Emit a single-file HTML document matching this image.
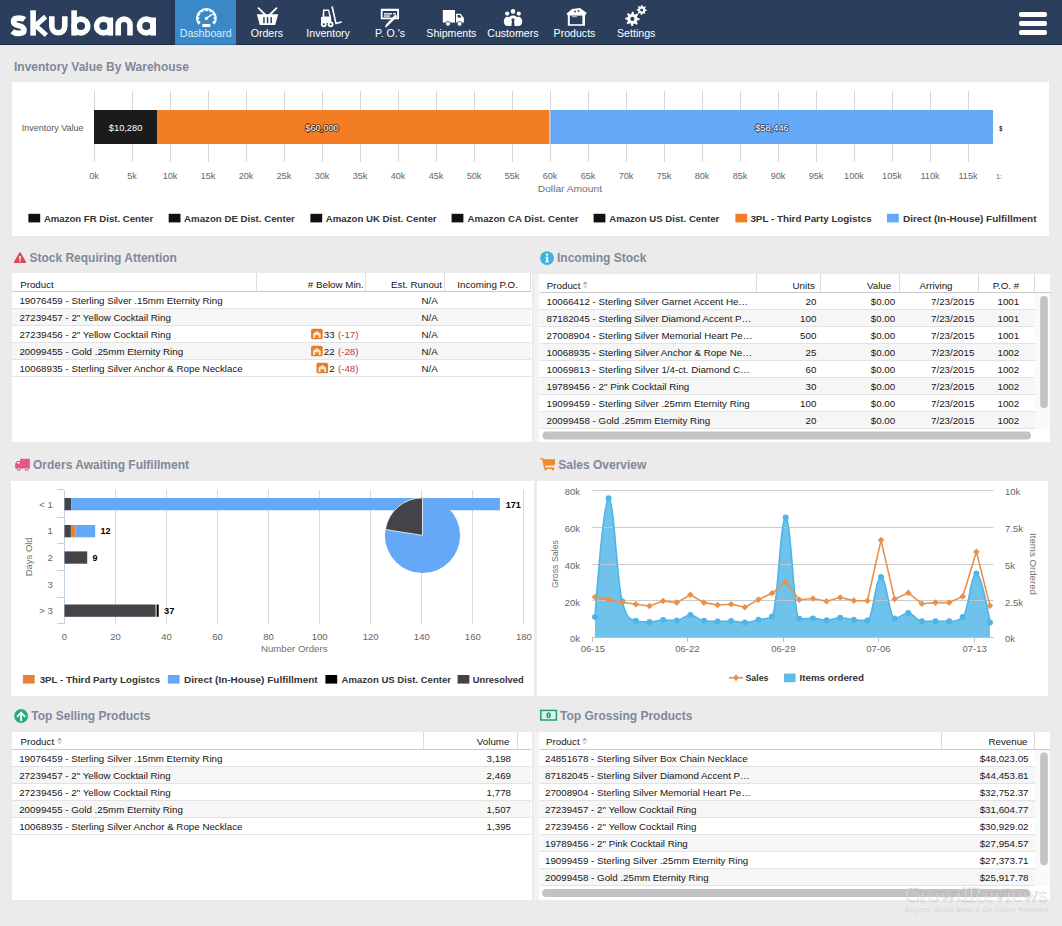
<!DOCTYPE html>
<html><head><meta charset="utf-8"><title>Skubana Dashboard</title>
<style>
*{margin:0;padding:0;box-sizing:border-box}
html,body{width:1062px;height:926px;overflow:hidden;background:#ebebeb;font-family:"Liberation Sans", sans-serif;}
.abs{position:absolute}
#hdr{position:absolute;left:0;top:0;width:1062px;height:45px;background:#2b3f5d}
.nav{position:absolute;top:0;height:45px;width:61px;color:#fff;font-size:10.6px;text-align:center}
.nav span{position:absolute;left:-10px;right:-10px;top:27px;line-height:12px}
.nav svg{position:absolute;left:0;top:0}
.ttl{position:absolute;font-weight:bold;font-size:12px;color:#808898;line-height:14px;white-space:nowrap}
.panel{position:absolute;background:#fff}
table{border-collapse:collapse;table-layout:fixed;font-size:9.75px;color:#1e1e1e}
td,th{white-space:nowrap;overflow:hidden;text-overflow:ellipsis;font-weight:normal}
</style></head><body>

<div id="hdr">
<div class="abs" style="left:170px;top:0;width:5px;height:45px;background:#25385a"></div>
<div class="abs" style="left:175px;top:0;width:61px;height:45px;background:#3b88c8"></div>
<svg class="abs" style="left:0;top:0" width="170" height="45"><g fill="none" stroke="#fff" stroke-width="5.6"><path d="M24.6,19.6 C22.8,18.3 21,18.1 18.7,18.1 C15.5,18.1 13.5,19.4 13.5,21.7 C13.5,24.2 16,24.9 18.7,25.6 C21.6,26.3 24,27.2 24,30 C24,32.4 21.8,33.4 18.6,33.4 C16,33.4 13.8,32.8 12.2,31.4"/><path d="M33.1,10.3 L33.1,35.6"/><path d="M45.6,16.6 L35.6,25.6 L46.4,35.2" stroke-width="4.8" stroke-linejoin="miter"/><path d="M51.8,16.3 L51.8,26.3 A6.5,6.5 0 0 0 64.8,26.3 L64.8,16.3"/><path d="M74.1,10.3 L74.1,35.6"/><circle cx="80.9" cy="26" r="6.9"/><circle cx="103.5" cy="26" r="6.9"/><path d="M110.3,17.5 L110.3,35.6"/><path d="M118.2,35.6 L118.2,25 A5.9,5.9 0 0 1 130,25 L130,35.6"/><circle cx="146.3" cy="26" r="6.9"/><path d="M153.2,17.5 L153.2,35.6"/></g></svg>
<div class="nav" style="left:175.2px"><span style="color:#d2f1ff">Dashboard</span></div>
<div class="nav" style="left:236.4px"><span>Orders</span></div>
<div class="nav" style="left:297.6px"><span>Inventory</span></div>
<div class="nav" style="left:359.5px"><span>P. O.'s</span></div>
<div class="nav" style="left:420.9px"><span>Shipments</span></div>
<div class="nav" style="left:482.4px"><span>Customers</span></div>
<div class="nav" style="left:544.0px"><span>Products</span></div>
<div class="nav" style="left:605.7px"><span>Settings</span></div>
<svg class="abs" style="left:0;top:0" width="1062" height="45">
<path d="M199.39,23.78 A8.9,8.9 0 1 1 213.41,23.78" fill="none" stroke="#fff" stroke-width="3.0"/><circle cx="198.93" cy="20.16" r="0.85" fill="#3b88c8"/><circle cx="198.96" cy="16.31" r="0.85" fill="#3b88c8"/><circle cx="200.96" cy="12.86" r="0.85" fill="#3b88c8"/><circle cx="204.15" cy="10.94" r="0.85" fill="#3b88c8"/><circle cx="208.65" cy="10.94" r="0.85" fill="#3b88c8"/><circle cx="211.84" cy="12.86" r="0.85" fill="#3b88c8"/><circle cx="213.84" cy="16.31" r="0.85" fill="#3b88c8"/><circle cx="213.87" cy="20.16" r="0.85" fill="#3b88c8"/>
<path d="M206.2,18.4 L211.6,14.7" stroke="#fff" stroke-width="1.5" stroke-linecap="round"/><circle cx="206.3" cy="18.4" r="1.6" fill="#fff"/>
<rect x="202.3" y="24.1" width="8.1" height="2.8" rx="0.5" fill="#fff"/>
<path d="M258.5,8.2 L265.5,15" stroke="#fff" stroke-width="1.8" stroke-linecap="round"/><path d="M276.5,8.2 L269.5,15" stroke="#fff" stroke-width="1.8" stroke-linecap="round"/>
<path d="M256.8,14.2 L278.2,14.2 L277.4,17 L275.2,25.1 L259.8,25.1 L257.6,17 Z" fill="#fff"/>
<rect x="263.2" y="17.2" width="1.5" height="6" fill="#2b3f5d"/><rect x="266.8" y="17.2" width="1.5" height="6" fill="#2b3f5d"/><rect x="270.4" y="17.2" width="1.5" height="6" fill="#2b3f5d"/>
<path d="M332.2,7 L336,23.6 L341.2,22" fill="none" stroke="#fff" stroke-width="1.6" stroke-linecap="round" stroke-linejoin="round"/>
<path d="M323,9.5 L329,9.5 L331,17 L331.5,23 L321,23 L321,17 L322.5,17 Z M324.3,11 L324.3,16.5 L329.4,16.5 L328,11 Z" fill="#fff" fill-rule="evenodd"/>
<circle cx="323.8" cy="24.3" r="2.9" fill="#fff"/><circle cx="323.8" cy="24.3" r="1.1" fill="#2b3f5d"/><circle cx="330.6" cy="24.3" r="2.9" fill="#fff"/><circle cx="330.6" cy="24.3" r="1.1" fill="#2b3f5d"/>
<path d="M380.8,8.8 L399,8.8 L399,19.2 L380.8,19.2 Z M382.6,11 L382.6,17.5 L397.2,17.5 L397.2,11 Z" fill="#fff" fill-rule="evenodd"/>
<rect x="384" y="13.2" width="8" height="1.3" fill="#fff"/><rect x="384" y="15.4" width="6" height="1.3" fill="#fff"/><rect x="393" y="13.2" width="3" height="1.3" fill="#fff"/>
<path d="M396.5,16.3 L387.3,25.6 L385.8,26.8 L386.4,25 L395.3,15.4 Z" fill="#fff" stroke="#fff" stroke-width="1.2" stroke-linejoin="round"/>
<rect x="442.8" y="10" width="12.2" height="12.6" fill="#fff"/><path d="M456,13.8 L460.5,13.8 L463.9,18 L463.9,22.6 L456,22.6 Z" fill="#fff"/><path d="M457.5,15 L459.8,15 L461.8,17.6 L457.5,17.6 Z" fill="#2b3f5d"/>
<circle cx="448" cy="23.8" r="2.4" fill="#fff" stroke="#2b3f5d" stroke-width="0.8"/><circle cx="459.6" cy="23.8" r="2.4" fill="#fff" stroke="#2b3f5d" stroke-width="0.8"/>
<ellipse cx="507.4" cy="21.4" rx="3.6" ry="4.6" fill="#fff"/><ellipse cx="518.6" cy="21.4" rx="3.6" ry="4.6" fill="#fff"/>
<circle cx="507.2" cy="13.6" r="2.1" fill="#fff"/><circle cx="518.8" cy="13.6" r="2.1" fill="#fff"/>
<path d="M508.6,26 L508.6,19.5 Q508.6,15.4 513,15.4 Q517.4,15.4 517.4,19.5 L517.4,26 Z" fill="#fff"/>
<circle cx="513" cy="11.4" r="2.3" fill="#fff"/>
<circle cx="513" cy="19.9" r="1.6" fill="#2b3f5d"/><path d="M511.3,26.2 L512,21 L514,21 L514.7,26.2 Z" fill="#2b3f5d"/>
<path d="M566.5,13.8 L572,9 L580,8 L586.8,13 L585,15.5 L585,25.8 L567.8,25.8 L567.8,15.5 Z" fill="#fff"/>
<rect x="569.8" y="15.6" width="12.6" height="8.6" fill="#2b3f5d"/><rect x="572" y="16.2" width="5" height="1" fill="#fff" opacity="0.7"/>
<circle cx="575" cy="11.5" r="0.9" fill="#2b3f5d"/><circle cx="578.5" cy="11" r="0.9" fill="#2b3f5d"/>
<path d="M632.05,11.71 L633.46,11.78 L634.08,14.19 L634.97,14.61 L637.24,13.57 L638.18,14.61 L636.92,16.76 L637.25,17.69 L639.59,18.55 L639.52,19.96 L637.11,20.58 L636.69,21.47 L637.73,23.74 L636.69,24.68 L634.54,23.42 L633.61,23.75 L632.75,26.09 L631.34,26.02 L630.72,23.61 L629.83,23.19 L627.56,24.23 L626.62,23.19 L627.88,21.04 L627.55,20.11 L625.21,19.25 L625.28,17.84 L627.69,17.22 L628.11,16.33 L627.07,14.06 L628.11,13.12 L630.26,14.38 L631.19,14.05 Z M634.5,18.9 A2.1,2.1 0 1 0 630.3,18.9 A2.1,2.1 0 1 0 634.5,18.9 Z" fill="#fff" fill-rule="evenodd"/>
<path d="M641.45,5.01 L642.43,5.05 L642.88,6.70 L643.50,7.00 L645.06,6.30 L645.72,7.02 L644.86,8.50 L645.10,9.15 L646.69,9.75 L646.65,10.73 L645.00,11.18 L644.70,11.80 L645.40,13.36 L644.68,14.02 L643.20,13.16 L642.55,13.40 L641.95,14.99 L640.97,14.95 L640.52,13.30 L639.90,13.00 L638.34,13.70 L637.68,12.98 L638.54,11.50 L638.30,10.85 L636.71,10.25 L636.75,9.27 L638.40,8.82 L638.70,8.20 L638.00,6.64 L638.72,5.98 L640.20,6.84 L640.85,6.60 Z M643.2,10.0 A1.5,1.5 0 1 0 640.2,10.0 A1.5,1.5 0 1 0 643.2,10.0 Z" fill="#fff" fill-rule="evenodd"/>
</svg>
<div class="abs" style="left:0;top:44px;width:1062px;height:1px;background:#1f2e44"></div>
<div class="abs" style="left:0;top:45px;width:1062px;height:1px;background:#e2e8ee"></div>
<div class="abs" style="left:175px;top:44px;width:61px;height:1px;background:#2f6ea6"></div>
<div class="abs" style="left:175px;top:45px;width:61px;height:1px;background:#d8eef8"></div>
<div class="abs" style="left:1019px;top:12px;width:28px;height:4.5px;border-radius:2px;background:#fff"></div>
<div class="abs" style="left:1019px;top:21px;width:28px;height:4.5px;border-radius:2px;background:#fff"></div>
<div class="abs" style="left:1019px;top:30px;width:28px;height:4.5px;border-radius:2px;background:#fff"></div>
</div>
<div class="ttl" style="left:14px;top:60px">Inventory Value By Warehouse</div>
<div class="ttl" style="left:29.4px;top:251px">Stock Requiring Attention</div>
<div class="ttl" style="left:557px;top:251px">Incoming Stock</div>
<div class="ttl" style="left:33px;top:458px">Orders Awaiting Fulfillment</div>
<div class="ttl" style="left:558.3px;top:458px">Sales Overview</div>
<div class="ttl" style="left:31.3px;top:709px">Top Selling Products</div>
<div class="ttl" style="left:560px;top:709px">Top Grossing Products</div>
<div class="panel" style="left:12px;top:82px;width:1037px;height:154px"></div>
<div class="panel" style="left:12px;top:273px;width:520px;height:169px"></div>
<div class="panel" style="left:539px;top:274px;width:511px;height:168px"></div>
<div class="panel" style="left:11px;top:481px;width:523px;height:215px"></div>
<div class="panel" style="left:537px;top:481px;width:511px;height:215px"></div>
<div class="panel" style="left:12px;top:732px;width:520px;height:168px"></div>
<div class="panel" style="left:539px;top:732px;width:511px;height:168px"></div>
<div class="abs" style="left:534px;top:274px;width:5px;height:168px;background:#f2f2f2"></div>
<div class="abs" style="left:534px;top:732px;width:5px;height:168px;background:#f2f2f2"></div>
<svg class="abs" style="left:0;top:0;font-family:'Liberation Sans',sans-serif" width="1062" height="926">
<rect x="94" y="91" width="1" height="71" fill="#d6d6d6"/>
<rect x="132" y="91" width="1" height="71" fill="#d6d6d6"/>
<rect x="170" y="91" width="1" height="71" fill="#d6d6d6"/>
<rect x="208" y="91" width="1" height="71" fill="#d6d6d6"/>
<rect x="246" y="91" width="1" height="71" fill="#d6d6d6"/>
<rect x="284" y="91" width="1" height="71" fill="#d6d6d6"/>
<rect x="322" y="91" width="1" height="71" fill="#d6d6d6"/>
<rect x="360" y="91" width="1" height="71" fill="#d6d6d6"/>
<rect x="398" y="91" width="1" height="71" fill="#d6d6d6"/>
<rect x="436" y="91" width="1" height="71" fill="#d6d6d6"/>
<rect x="474" y="91" width="1" height="71" fill="#d6d6d6"/>
<rect x="512" y="91" width="1" height="71" fill="#d6d6d6"/>
<rect x="550" y="91" width="1" height="71" fill="#d6d6d6"/>
<rect x="588" y="91" width="1" height="71" fill="#d6d6d6"/>
<rect x="626" y="91" width="1" height="71" fill="#d6d6d6"/>
<rect x="664" y="91" width="1" height="71" fill="#d6d6d6"/>
<rect x="702" y="91" width="1" height="71" fill="#d6d6d6"/>
<rect x="740" y="91" width="1" height="71" fill="#d6d6d6"/>
<rect x="778" y="91" width="1" height="71" fill="#d6d6d6"/>
<rect x="816" y="91" width="1" height="71" fill="#d6d6d6"/>
<rect x="854" y="91" width="1" height="71" fill="#d6d6d6"/>
<rect x="892" y="91" width="1" height="71" fill="#d6d6d6"/>
<rect x="930" y="91" width="1" height="71" fill="#d6d6d6"/>
<rect x="968" y="91" width="1" height="71" fill="#d6d6d6"/>
<rect x="94" y="110" width="63" height="34" fill="#1b1b1b"/>
<rect x="157" y="110" width="392.5" height="34" fill="#f27d24"/>
<rect x="550.5" y="110" width="442.5" height="34" fill="#64a9f7"/>
<text x="125.6" y="131.3" font-size="9" fill="#fff" text-anchor="middle" textLength="33.5" lengthAdjust="spacingAndGlyphs">$10,280</text>
<text x="322.0" y="131.3" font-size="9" fill="#fff" text-anchor="middle" textLength="33.5" lengthAdjust="spacingAndGlyphs" stroke="#4a2a10" stroke-width="1.6" paint-order="stroke">$60,000</text>
<text x="772.0" y="131.3" font-size="9" fill="#fff" text-anchor="middle" textLength="33.5" lengthAdjust="spacingAndGlyphs" stroke="#2c4d78" stroke-width="1.6" paint-order="stroke">$58,446</text>
<text x="999.2" y="131.3" font-size="8" fill="#111" font-weight="bold" textLength="3.0" lengthAdjust="spacingAndGlyphs">$</text>
<text x="83.6" y="131.0" font-size="8.5" fill="#555" text-anchor="end" textLength="61.8" lengthAdjust="spacingAndGlyphs">Inventory Value</text>
<text x="94.0" y="179.2" font-size="8.6" fill="#666" text-anchor="middle" textLength="9.6" lengthAdjust="spacingAndGlyphs">0k</text>
<text x="132.0" y="179.2" font-size="8.6" fill="#666" text-anchor="middle" textLength="9.6" lengthAdjust="spacingAndGlyphs">5k</text>
<text x="170.0" y="179.2" font-size="8.6" fill="#666" text-anchor="middle" textLength="14.7" lengthAdjust="spacingAndGlyphs">10k</text>
<text x="208.0" y="179.2" font-size="8.6" fill="#666" text-anchor="middle" textLength="14.7" lengthAdjust="spacingAndGlyphs">15k</text>
<text x="246.0" y="179.2" font-size="8.6" fill="#666" text-anchor="middle" textLength="14.7" lengthAdjust="spacingAndGlyphs">20k</text>
<text x="284.0" y="179.2" font-size="8.6" fill="#666" text-anchor="middle" textLength="14.7" lengthAdjust="spacingAndGlyphs">25k</text>
<text x="322.0" y="179.2" font-size="8.6" fill="#666" text-anchor="middle" textLength="14.7" lengthAdjust="spacingAndGlyphs">30k</text>
<text x="360.0" y="179.2" font-size="8.6" fill="#666" text-anchor="middle" textLength="14.7" lengthAdjust="spacingAndGlyphs">35k</text>
<text x="398.0" y="179.2" font-size="8.6" fill="#666" text-anchor="middle" textLength="14.7" lengthAdjust="spacingAndGlyphs">40k</text>
<text x="436.0" y="179.2" font-size="8.6" fill="#666" text-anchor="middle" textLength="14.7" lengthAdjust="spacingAndGlyphs">45k</text>
<text x="474.0" y="179.2" font-size="8.6" fill="#666" text-anchor="middle" textLength="14.7" lengthAdjust="spacingAndGlyphs">50k</text>
<text x="512.0" y="179.2" font-size="8.6" fill="#666" text-anchor="middle" textLength="14.7" lengthAdjust="spacingAndGlyphs">55k</text>
<text x="550.0" y="179.2" font-size="8.6" fill="#666" text-anchor="middle" textLength="14.7" lengthAdjust="spacingAndGlyphs">60k</text>
<text x="588.0" y="179.2" font-size="8.6" fill="#666" text-anchor="middle" textLength="14.7" lengthAdjust="spacingAndGlyphs">65k</text>
<text x="626.0" y="179.2" font-size="8.6" fill="#666" text-anchor="middle" textLength="14.7" lengthAdjust="spacingAndGlyphs">70k</text>
<text x="664.0" y="179.2" font-size="8.6" fill="#666" text-anchor="middle" textLength="14.7" lengthAdjust="spacingAndGlyphs">75k</text>
<text x="702.0" y="179.2" font-size="8.6" fill="#666" text-anchor="middle" textLength="14.7" lengthAdjust="spacingAndGlyphs">80k</text>
<text x="740.0" y="179.2" font-size="8.6" fill="#666" text-anchor="middle" textLength="14.7" lengthAdjust="spacingAndGlyphs">85k</text>
<text x="778.0" y="179.2" font-size="8.6" fill="#666" text-anchor="middle" textLength="14.7" lengthAdjust="spacingAndGlyphs">90k</text>
<text x="816.0" y="179.2" font-size="8.6" fill="#666" text-anchor="middle" textLength="14.7" lengthAdjust="spacingAndGlyphs">95k</text>
<text x="854.0" y="179.2" font-size="8.6" fill="#666" text-anchor="middle" textLength="19.8" lengthAdjust="spacingAndGlyphs">100k</text>
<text x="892.0" y="179.2" font-size="8.6" fill="#666" text-anchor="middle" textLength="19.8" lengthAdjust="spacingAndGlyphs">105k</text>
<text x="930.0" y="179.2" font-size="8.6" fill="#666" text-anchor="middle" textLength="19.1" lengthAdjust="spacingAndGlyphs">110k</text>
<text x="968.0" y="179.2" font-size="8.6" fill="#666" text-anchor="middle" textLength="19.1" lengthAdjust="spacingAndGlyphs">115k</text>
<text x="996.0" y="179.0" font-size="8" fill="#666" textLength="6.0" lengthAdjust="spacingAndGlyphs">1:</text>
<text x="537.8" y="192.0" font-size="9.5" fill="#6f6f6f" textLength="64.2" lengthAdjust="spacingAndGlyphs">Dollar Amount</text>
<rect x="28.4" y="213.8" width="11.8" height="8.6" fill="#111"/>
<text x="43.9" y="221.6" font-size="9" fill="#333" font-weight="bold" textLength="109.3" lengthAdjust="spacingAndGlyphs">Amazon FR Dist. Center</text>
<rect x="168.7" y="213.8" width="11.8" height="8.6" fill="#111"/>
<text x="184.1" y="221.6" font-size="9" fill="#333" font-weight="bold" textLength="110.8" lengthAdjust="spacingAndGlyphs">Amazon DE Dist. Center</text>
<rect x="310.4" y="213.8" width="11.8" height="8.6" fill="#111"/>
<text x="325.8" y="221.6" font-size="9" fill="#333" font-weight="bold" textLength="110.8" lengthAdjust="spacingAndGlyphs">Amazon UK Dist. Center</text>
<rect x="451.6" y="213.8" width="11.8" height="8.6" fill="#111"/>
<text x="467.6" y="221.6" font-size="9" fill="#333" font-weight="bold" textLength="111.0" lengthAdjust="spacingAndGlyphs">Amazon CA Dist. Center</text>
<rect x="593.6" y="213.8" width="11.8" height="8.6" fill="#111"/>
<text x="609.2" y="221.6" font-size="9" fill="#333" font-weight="bold" textLength="110.2" lengthAdjust="spacingAndGlyphs">Amazon US Dist. Center</text>
<rect x="735.4" y="213.8" width="11.8" height="8.6" fill="#f27d24"/>
<text x="750.4" y="221.6" font-size="9" fill="#333" font-weight="bold" textLength="121.3" lengthAdjust="spacingAndGlyphs">3PL - Third Party Logistcs</text>
<rect x="887.0" y="213.8" width="11.8" height="8.6" fill="#64a9f7"/>
<text x="903.0" y="221.6" font-size="9" fill="#333" font-weight="bold" textLength="133.5" lengthAdjust="spacingAndGlyphs">Direct (In-House) Fulfillment</text>
</svg>
<svg class="abs" style="left:0;top:0;font-family:'Liberation Sans',sans-serif" width="1062" height="926">
<rect x="256" y="273" width="1" height="18" fill="#dcdcdc"/><rect x="365" y="273" width="1" height="18" fill="#dcdcdc"/><rect x="444" y="273" width="1" height="18" fill="#dcdcdc"/><rect x="530" y="273" width="1" height="18" fill="#dcdcdc"/><rect x="12" y="291" width="519" height="1" fill="#c9c9c9"/><rect x="12" y="308" width="519" height="1" fill="#e3e3e3"/><rect x="12" y="309" width="519" height="16" fill="#f6f6f6"/><rect x="12" y="325" width="519" height="1" fill="#e3e3e3"/><rect x="12" y="342" width="519" height="1" fill="#e3e3e3"/><rect x="12" y="343" width="519" height="16" fill="#f6f6f6"/><rect x="12" y="359" width="519" height="1" fill="#e3e3e3"/><rect x="12" y="376" width="519" height="1" fill="#e3e3e3"/>
<text x="20.2" y="288.0" font-size="9.75" fill="#151515">Product</text>
<text x="363.7" y="288.0" font-size="9.75" fill="#151515" text-anchor="end"># Below Min.</text>
<text x="442.0" y="288.0" font-size="9.75" fill="#151515" text-anchor="end">Est. Runout</text>
<text x="487.6" y="288.0" font-size="9.75" fill="#151515" text-anchor="middle">Incoming P.O.</text>
<text x="19.4" y="303.7" font-size="9.75" fill="#151515">19076459 - Sterling Silver .15mm Eternity Ring</text>
<text x="437.7" y="303.7" font-size="9.75" fill="#151515" text-anchor="end">N/A</text>
<text x="19.4" y="320.7" font-size="9.75" fill="#151515">27239457 - 2" Yellow Cocktail Ring</text>
<text x="437.7" y="320.7" font-size="9.75" fill="#151515" text-anchor="end">N/A</text>
<text x="19.4" y="337.7" font-size="9.75" fill="#151515">27239456 - 2" Yellow Cocktail Ring</text>
<text x="437.7" y="337.7" font-size="9.75" fill="#151515" text-anchor="end">N/A</text>
<text x="358.5" y="337.7" font-size="9.75" fill="#b8403f" text-anchor="end">(-17)</text>
<text x="334.7" y="337.7" font-size="9.75" fill="#151515" text-anchor="end">33</text>
<rect x="311.07300781249995" y="328.7" width="11.6" height="10.6" rx="1.6" fill="#e27f2e"/><path d="M313.07300781249995,337.9 L313.07300781249995,333.7 L316.87300781249996,330.9 L320.6730078125,333.7 L320.6730078125,337.9 L318.6730078125,337.9 L318.6730078125,335.3 L315.07300781249995,335.3 L315.07300781249995,337.9 Z" fill="#fde2c4"/>
<text x="19.4" y="354.7" font-size="9.75" fill="#151515">20099455 - Gold .25mm Eternity Ring</text>
<text x="437.7" y="354.7" font-size="9.75" fill="#151515" text-anchor="end">N/A</text>
<text x="358.5" y="354.7" font-size="9.75" fill="#b8403f" text-anchor="end">(-28)</text>
<text x="334.7" y="354.7" font-size="9.75" fill="#151515" text-anchor="end">22</text>
<rect x="311.07300781249995" y="345.7" width="11.6" height="10.6" rx="1.6" fill="#e27f2e"/><path d="M313.07300781249995,354.9 L313.07300781249995,350.7 L316.87300781249996,347.9 L320.6730078125,350.7 L320.6730078125,354.9 L318.6730078125,354.9 L318.6730078125,352.3 L315.07300781249995,352.3 L315.07300781249995,354.9 Z" fill="#fde2c4"/>
<text x="19.4" y="371.7" font-size="9.75" fill="#151515">10068935 - Sterling Silver Anchor &amp; Rope Necklace</text>
<text x="437.7" y="371.7" font-size="9.75" fill="#151515" text-anchor="end">N/A</text>
<text x="358.5" y="371.7" font-size="9.75" fill="#b8403f" text-anchor="end">(-48)</text>
<text x="334.7" y="371.7" font-size="9.75" fill="#151515" text-anchor="end">2</text>
<rect x="316.494921875" y="362.7" width="11.6" height="10.6" rx="1.6" fill="#e27f2e"/><path d="M318.494921875,371.9 L318.494921875,367.7 L322.294921875,364.9 L326.094921875,367.7 L326.094921875,371.9 L324.094921875,371.9 L324.094921875,369.3 L320.494921875,369.3 L320.494921875,371.9 Z" fill="#fde2c4"/>
<rect x="756" y="274" width="1" height="18" fill="#dcdcdc"/><rect x="820" y="274" width="1" height="18" fill="#dcdcdc"/><rect x="899" y="274" width="1" height="18" fill="#dcdcdc"/><rect x="978" y="274" width="1" height="18" fill="#dcdcdc"/><rect x="1034" y="274" width="1" height="18" fill="#dcdcdc"/><rect x="540" y="292" width="510" height="1" fill="#c9c9c9"/><rect x="540" y="309" width="495" height="1" fill="#e3e3e3"/><rect x="540" y="310" width="495" height="16" fill="#f6f6f6"/><rect x="540" y="326" width="495" height="1" fill="#e3e3e3"/><rect x="540" y="343" width="495" height="1" fill="#e3e3e3"/><rect x="540" y="344" width="495" height="16" fill="#f6f6f6"/><rect x="540" y="360" width="495" height="1" fill="#e3e3e3"/><rect x="540" y="377" width="495" height="1" fill="#e3e3e3"/><rect x="540" y="378" width="495" height="16" fill="#f6f6f6"/><rect x="540" y="394" width="495" height="1" fill="#e3e3e3"/><rect x="540" y="411" width="495" height="1" fill="#e3e3e3"/><rect x="540" y="412" width="495" height="16" fill="#f6f6f6"/><rect x="540" y="428" width="495" height="1" fill="#e3e3e3"/>
<text x="546.8" y="288.8" font-size="9.75" fill="#151515">Product</text>
<path d="M582.6,284.2 L587.8000000000001,284.2 L585.2,281.2 Z" fill="#ababab"/><path d="M582.6,285.40000000000003 L587.8000000000001,285.40000000000003 L585.2,288.40000000000003 Z" fill="#d0d0d0"/>
<text x="814.8" y="288.8" font-size="9.75" fill="#151515" text-anchor="end">Units</text>
<text x="891.2" y="288.8" font-size="9.75" fill="#151515" text-anchor="end">Value</text>
<text x="936.0" y="288.8" font-size="9.75" fill="#151515" text-anchor="middle">Arriving</text>
<text x="1006.0" y="288.8" font-size="9.75" fill="#151515" text-anchor="middle">P.O. #</text>
<text x="546.5" y="304.7" font-size="9.75" fill="#151515">10066412 - Sterling Silver Garnet Accent He…</text>
<text x="816.4" y="304.7" font-size="9.75" fill="#151515" text-anchor="end">20</text>
<text x="895.2" y="304.7" font-size="9.75" fill="#151515" text-anchor="end">$0.00</text>
<text x="974.4" y="304.7" font-size="9.75" fill="#151515" text-anchor="end">7/23/2015</text>
<text x="1019.2" y="304.7" font-size="9.75" fill="#151515" text-anchor="end">1001</text>
<text x="546.5" y="321.7" font-size="9.75" fill="#151515">87182045 - Sterling Silver Diamond Accent P…</text>
<text x="816.4" y="321.7" font-size="9.75" fill="#151515" text-anchor="end">100</text>
<text x="895.2" y="321.7" font-size="9.75" fill="#151515" text-anchor="end">$0.00</text>
<text x="974.4" y="321.7" font-size="9.75" fill="#151515" text-anchor="end">7/23/2015</text>
<text x="1019.2" y="321.7" font-size="9.75" fill="#151515" text-anchor="end">1001</text>
<text x="546.5" y="338.7" font-size="9.75" fill="#151515">27008904 - Sterling Silver Memorial Heart Pe…</text>
<text x="816.4" y="338.7" font-size="9.75" fill="#151515" text-anchor="end">500</text>
<text x="895.2" y="338.7" font-size="9.75" fill="#151515" text-anchor="end">$0.00</text>
<text x="974.4" y="338.7" font-size="9.75" fill="#151515" text-anchor="end">7/23/2015</text>
<text x="1019.2" y="338.7" font-size="9.75" fill="#151515" text-anchor="end">1001</text>
<text x="546.5" y="355.7" font-size="9.75" fill="#151515">10068935 - Sterling Silver Anchor &amp; Rope Ne…</text>
<text x="816.4" y="355.7" font-size="9.75" fill="#151515" text-anchor="end">25</text>
<text x="895.2" y="355.7" font-size="9.75" fill="#151515" text-anchor="end">$0.00</text>
<text x="974.4" y="355.7" font-size="9.75" fill="#151515" text-anchor="end">7/23/2015</text>
<text x="1019.2" y="355.7" font-size="9.75" fill="#151515" text-anchor="end">1002</text>
<text x="546.5" y="372.7" font-size="9.75" fill="#151515">10069813 - Sterling Silver 1/4-ct. Diamond C…</text>
<text x="816.4" y="372.7" font-size="9.75" fill="#151515" text-anchor="end">60</text>
<text x="895.2" y="372.7" font-size="9.75" fill="#151515" text-anchor="end">$0.00</text>
<text x="974.4" y="372.7" font-size="9.75" fill="#151515" text-anchor="end">7/23/2015</text>
<text x="1019.2" y="372.7" font-size="9.75" fill="#151515" text-anchor="end">1002</text>
<text x="546.5" y="389.7" font-size="9.75" fill="#151515">19789456 - 2" Pink Cocktail Ring</text>
<text x="816.4" y="389.7" font-size="9.75" fill="#151515" text-anchor="end">30</text>
<text x="895.2" y="389.7" font-size="9.75" fill="#151515" text-anchor="end">$0.00</text>
<text x="974.4" y="389.7" font-size="9.75" fill="#151515" text-anchor="end">7/23/2015</text>
<text x="1019.2" y="389.7" font-size="9.75" fill="#151515" text-anchor="end">1002</text>
<text x="546.5" y="406.7" font-size="9.75" fill="#151515">19099459 - Sterling Silver .25mm Eternity Ring</text>
<text x="816.4" y="406.7" font-size="9.75" fill="#151515" text-anchor="end">100</text>
<text x="895.2" y="406.7" font-size="9.75" fill="#151515" text-anchor="end">$0.00</text>
<text x="974.4" y="406.7" font-size="9.75" fill="#151515" text-anchor="end">7/23/2015</text>
<text x="1019.2" y="406.7" font-size="9.75" fill="#151515" text-anchor="end">1002</text>
<text x="546.5" y="423.7" font-size="9.75" fill="#151515">20099458 - Gold .25mm Eternity Ring</text>
<text x="816.4" y="423.7" font-size="9.75" fill="#151515" text-anchor="end">20</text>
<text x="895.2" y="423.7" font-size="9.75" fill="#151515" text-anchor="end">$0.00</text>
<text x="974.4" y="423.7" font-size="9.75" fill="#151515" text-anchor="end">7/23/2015</text>
<text x="1019.2" y="423.7" font-size="9.75" fill="#151515" text-anchor="end">1002</text>
<rect x="1035" y="293" width="15" height="136" fill="#fafafa"/>
<rect x="1040.2" y="296" width="7.6" height="112" rx="3.8" fill="#c3c3c3"/>
<rect x="542.5" y="431.4" width="488.5" height="8" rx="4" fill="#c3c3c3"/>
<rect x="423" y="732" width="1" height="17" fill="#dcdcdc"/><rect x="517" y="732" width="1" height="17" fill="#dcdcdc"/><rect x="12" y="749" width="519" height="1" fill="#c9c9c9"/><rect x="12" y="766" width="519" height="1" fill="#e3e3e3"/><rect x="12" y="767" width="519" height="16" fill="#f6f6f6"/><rect x="12" y="783" width="519" height="1" fill="#e3e3e3"/><rect x="12" y="800" width="519" height="1" fill="#e3e3e3"/><rect x="12" y="801" width="519" height="16" fill="#f6f6f6"/><rect x="12" y="817" width="519" height="1" fill="#e3e3e3"/><rect x="12" y="834" width="519" height="1" fill="#e3e3e3"/>
<text x="20.5" y="745.2" font-size="9.75" fill="#151515">Product</text>
<path d="M57,740.6 L62.2,740.6 L59.6,737.6 Z" fill="#ababab"/><path d="M57,741.8000000000001 L62.2,741.8000000000001 L59.6,744.8000000000001 Z" fill="#d0d0d0"/>
<text x="509.4" y="745.2" font-size="9.75" fill="#151515" text-anchor="end">Volume</text>
<text x="19.2" y="761.7" font-size="9.75" fill="#151515">19076459 - Sterling Silver .15mm Eternity Ring</text>
<text x="511.0" y="761.7" font-size="9.75" fill="#151515" text-anchor="end">3,198</text>
<text x="19.2" y="778.7" font-size="9.75" fill="#151515">27239457 - 2" Yellow Cocktail Ring</text>
<text x="511.0" y="778.7" font-size="9.75" fill="#151515" text-anchor="end">2,469</text>
<text x="19.2" y="795.7" font-size="9.75" fill="#151515">27239456 - 2" Yellow Cocktail Ring</text>
<text x="511.0" y="795.7" font-size="9.75" fill="#151515" text-anchor="end">1,778</text>
<text x="19.2" y="812.7" font-size="9.75" fill="#151515">20099455 - Gold .25mm Eternity Ring</text>
<text x="511.0" y="812.7" font-size="9.75" fill="#151515" text-anchor="end">1,507</text>
<text x="19.2" y="829.7" font-size="9.75" fill="#151515">10068935 - Sterling Silver Anchor &amp; Rope Necklace</text>
<text x="511.0" y="829.7" font-size="9.75" fill="#151515" text-anchor="end">1,395</text>
<rect x="941" y="732" width="1" height="17" fill="#dcdcdc"/><rect x="1034" y="732" width="1" height="17" fill="#dcdcdc"/><rect x="540" y="749" width="510" height="1" fill="#c9c9c9"/><rect x="540" y="766" width="495" height="1" fill="#e3e3e3"/><rect x="540" y="767" width="495" height="16" fill="#f6f6f6"/><rect x="540" y="783" width="495" height="1" fill="#e3e3e3"/><rect x="540" y="800" width="495" height="1" fill="#e3e3e3"/><rect x="540" y="801" width="495" height="16" fill="#f6f6f6"/><rect x="540" y="817" width="495" height="1" fill="#e3e3e3"/><rect x="540" y="834" width="495" height="1" fill="#e3e3e3"/><rect x="540" y="835" width="495" height="16" fill="#f6f6f6"/><rect x="540" y="851" width="495" height="1" fill="#e3e3e3"/><rect x="540" y="868" width="495" height="1" fill="#e3e3e3"/><rect x="540" y="869" width="495" height="16" fill="#f6f6f6"/><rect x="540" y="885" width="495" height="1" fill="#e3e3e3"/>
<text x="546.0" y="745.2" font-size="9.75" fill="#151515">Product</text>
<path d="M582.1,740.6 L587.3000000000001,740.6 L584.7,737.6 Z" fill="#ababab"/><path d="M582.1,741.8000000000001 L587.3000000000001,741.8000000000001 L584.7,744.8000000000001 Z" fill="#d0d0d0"/>
<text x="1027.5" y="745.2" font-size="9.75" fill="#151515" text-anchor="end">Revenue</text>
<text x="545.0" y="761.7" font-size="9.75" fill="#151515">24851678 - Sterling Silver Box Chain Necklace</text>
<text x="1028.5" y="761.7" font-size="9.75" fill="#151515" text-anchor="end">$48,023.05</text>
<text x="545.0" y="778.7" font-size="9.75" fill="#151515">87182045 - Sterling Silver Diamond Accent P…</text>
<text x="1028.5" y="778.7" font-size="9.75" fill="#151515" text-anchor="end">$44,453.81</text>
<text x="545.0" y="795.7" font-size="9.75" fill="#151515">27008904 - Sterling Silver Memorial Heart Pe…</text>
<text x="1028.5" y="795.7" font-size="9.75" fill="#151515" text-anchor="end">$32,752.37</text>
<text x="545.0" y="812.7" font-size="9.75" fill="#151515">27239457 - 2" Yellow Cocktail Ring</text>
<text x="1028.5" y="812.7" font-size="9.75" fill="#151515" text-anchor="end">$31,604.77</text>
<text x="545.0" y="829.7" font-size="9.75" fill="#151515">27239456 - 2" Yellow Cocktail Ring</text>
<text x="1028.5" y="829.7" font-size="9.75" fill="#151515" text-anchor="end">$30,929.02</text>
<text x="545.0" y="846.7" font-size="9.75" fill="#151515">19789456 - 2" Pink Cocktail Ring</text>
<text x="1028.5" y="846.7" font-size="9.75" fill="#151515" text-anchor="end">$27,954.57</text>
<text x="545.0" y="863.7" font-size="9.75" fill="#151515">19099459 - Sterling Silver .25mm Eternity Ring</text>
<text x="1028.5" y="863.7" font-size="9.75" fill="#151515" text-anchor="end">$27,373.71</text>
<text x="545.0" y="880.7" font-size="9.75" fill="#151515">20099458 - Gold .25mm Eternity Ring</text>
<text x="1028.5" y="880.7" font-size="9.75" fill="#151515" text-anchor="end">$25,917.78</text>
<rect x="1035" y="750" width="15" height="136" fill="#fafafa"/>
<rect x="1040.2" y="752.6" width="7.6" height="112.7" rx="3.8" fill="#c3c3c3"/>
<rect x="542.2" y="889" width="488" height="8" rx="4" fill="#c3c3c3"/>
</svg>
<svg class="abs" style="left:0;top:0;font-family:'Liberation Sans',sans-serif" width="1062" height="926">
<rect x="115" y="490" width="1" height="134" fill="#d8d8d8"/>
<rect x="166" y="490" width="1" height="134" fill="#d8d8d8"/>
<rect x="217" y="490" width="1" height="134" fill="#d8d8d8"/>
<rect x="268" y="490" width="1" height="134" fill="#d8d8d8"/>
<rect x="319" y="490" width="1" height="134" fill="#d8d8d8"/>
<rect x="370" y="490" width="1" height="134" fill="#d8d8d8"/>
<rect x="421" y="490" width="1" height="134" fill="#d8d8d8"/>
<rect x="472" y="490" width="1" height="134" fill="#d8d8d8"/>
<rect x="523" y="490" width="1" height="134" fill="#d8d8d8"/>
<rect x="64" y="490" width="1" height="134" fill="#c0d0e0"/>
<rect x="57" y="489" width="7" height="1" fill="#c0d0e0"/>
<rect x="57" y="517" width="7" height="1" fill="#c0d0e0"/>
<rect x="57" y="543" width="7" height="1" fill="#c0d0e0"/>
<rect x="57" y="570" width="7" height="1" fill="#c0d0e0"/>
<rect x="57" y="597" width="7" height="1" fill="#c0d0e0"/>
<rect x="57" y="623" width="7" height="1" fill="#c0d0e0"/>
<rect x="64.5" y="498.0" width="6.8" height="12.3" fill="#434348"/>
<rect x="71.3" y="498.0" width="428.6" height="12.3" fill="#64a9f7"/>
<rect x="64.5" y="525.0" width="6.4" height="12.3" fill="#434348"/>
<rect x="70.9" y="525.0" width="4.8" height="12.3" fill="#e8823a"/>
<rect x="75.7" y="525.0" width="19.5" height="12.3" fill="#64a9f7"/>
<rect x="64.5" y="551.4" width="22.7" height="12.3" fill="#434348"/>
<rect x="64.5" y="604.5" width="91.1" height="12.3" fill="#434348"/>
<rect x="156.6" y="604.5" width="2.1" height="12.3" fill="#000"/>
<text x="505.8" y="507.5" font-size="9" fill="#000" font-weight="bold" textLength="15.1" lengthAdjust="spacingAndGlyphs">171</text>
<text x="100.4" y="533.6" font-size="9" fill="#000" font-weight="bold" textLength="10.1" lengthAdjust="spacingAndGlyphs">12</text>
<text x="92.6" y="560.5" font-size="9" fill="#000" font-weight="bold" textLength="5.0" lengthAdjust="spacingAndGlyphs">9</text>
<text x="164.0" y="613.8" font-size="9" fill="#000" font-weight="bold" textLength="10.3" lengthAdjust="spacingAndGlyphs">37</text>
<circle cx="422.5" cy="535.4" r="37.6" fill="#64a9f7"/>
<path d="M422.5,535.4 L422.5,497.79999999999995 A37.6,37.6 0 0 0 385.36,529.52 Z" fill="#434348" stroke="#fff" stroke-width="0.8" stroke-linejoin="round"/>
<text x="52.8" y="508.3" font-size="8.5" fill="#666" text-anchor="end" textLength="13.5" lengthAdjust="spacingAndGlyphs">&lt; 1</text>
<text x="52.8" y="534.1" font-size="8.5" fill="#666" text-anchor="end" textLength="5.3" lengthAdjust="spacingAndGlyphs">1</text>
<text x="52.8" y="561.2" font-size="8.5" fill="#666" text-anchor="end" textLength="5.3" lengthAdjust="spacingAndGlyphs">2</text>
<text x="52.8" y="588.0" font-size="8.5" fill="#666" text-anchor="end" textLength="5.3" lengthAdjust="spacingAndGlyphs">3</text>
<text x="52.8" y="613.8" font-size="8.5" fill="#666" text-anchor="end" textLength="13.5" lengthAdjust="spacingAndGlyphs">&gt; 3</text>
<text transform="translate(31.6,556.8) rotate(-90)" font-size="9.5" fill="#6f6f6f" text-anchor="middle" textLength="38.8" lengthAdjust="spacingAndGlyphs">Days Old</text>
<text x="64.4" y="639.6" font-size="8.5" fill="#666" text-anchor="middle" textLength="5.3" lengthAdjust="spacingAndGlyphs">0</text>
<text x="115.5" y="639.6" font-size="8.5" fill="#666" text-anchor="middle" textLength="10.6" lengthAdjust="spacingAndGlyphs">20</text>
<text x="166.5" y="639.6" font-size="8.5" fill="#666" text-anchor="middle" textLength="10.6" lengthAdjust="spacingAndGlyphs">40</text>
<text x="217.5" y="639.6" font-size="8.5" fill="#666" text-anchor="middle" textLength="10.6" lengthAdjust="spacingAndGlyphs">60</text>
<text x="268.6" y="639.6" font-size="8.5" fill="#666" text-anchor="middle" textLength="10.6" lengthAdjust="spacingAndGlyphs">80</text>
<text x="319.6" y="639.6" font-size="8.5" fill="#666" text-anchor="middle" textLength="15.9" lengthAdjust="spacingAndGlyphs">100</text>
<text x="370.7" y="639.6" font-size="8.5" fill="#666" text-anchor="middle" textLength="15.9" lengthAdjust="spacingAndGlyphs">120</text>
<text x="421.8" y="639.6" font-size="8.5" fill="#666" text-anchor="middle" textLength="15.9" lengthAdjust="spacingAndGlyphs">140</text>
<text x="472.8" y="639.6" font-size="8.5" fill="#666" text-anchor="middle" textLength="15.9" lengthAdjust="spacingAndGlyphs">160</text>
<text x="523.9" y="639.6" font-size="8.5" fill="#666" text-anchor="middle" textLength="15.9" lengthAdjust="spacingAndGlyphs">180</text>
<text x="261.0" y="651.8" font-size="9.5" fill="#6f6f6f" textLength="66.5" lengthAdjust="spacingAndGlyphs">Number Orders</text>
<rect x="22.9" y="675" width="11.8" height="8.6" fill="#e8823a"/>
<text x="39.7" y="682.8" font-size="9" fill="#333" font-weight="bold" textLength="120.4" lengthAdjust="spacingAndGlyphs">3PL - Third Party Logistcs</text>
<rect x="167.8" y="675" width="11.8" height="8.6" fill="#64a9f7"/>
<text x="184.0" y="682.8" font-size="9" fill="#333" font-weight="bold" textLength="133.7" lengthAdjust="spacingAndGlyphs">Direct (In-House) Fulfillment</text>
<rect x="325.4" y="675" width="11.8" height="8.6" fill="#000"/>
<text x="341.6" y="682.8" font-size="9" fill="#333" font-weight="bold" textLength="109.4" lengthAdjust="spacingAndGlyphs">Amazon US Dist. Center</text>
<rect x="457.6" y="675" width="11.8" height="8.6" fill="#434348"/>
<text x="472.8" y="682.8" font-size="9" fill="#333" font-weight="bold" textLength="50.8" lengthAdjust="spacingAndGlyphs">Unresolved</text>
</svg>
<svg class="abs" style="left:0;top:0;font-family:'Liberation Sans',sans-serif" width="1062" height="926">
<path d="M595.00,617.00 C595.00,617.00 603.17,498.20 608.62,498.20 C614.07,498.20 616.79,582.40 622.24,601.60 C627.69,620.80 630.41,619.60 635.86,620.80 C641.31,622.00 644.03,622.00 649.48,622.00 C654.93,622.00 657.65,620.00 663.10,620.00 C668.55,620.00 671.27,620.40 676.72,620.40 C682.17,620.40 684.89,615.00 690.34,615.00 C695.79,615.00 698.51,620.20 703.96,620.80 C709.41,621.40 712.13,621.40 717.58,621.40 C723.03,621.40 725.75,621.00 731.20,621.00 C736.65,621.00 739.37,622.40 744.82,622.40 C750.27,622.40 752.99,621.00 758.44,619.80 C763.89,618.60 766.61,619.80 772.06,616.40 C777.51,613.00 780.23,517.60 785.68,517.60 C791.13,517.60 793.85,618.80 799.30,618.80 C804.75,618.80 807.47,618.40 812.92,618.40 C818.37,618.40 821.09,620.30 826.54,620.30 C831.99,620.30 834.71,617.80 840.16,617.80 C845.61,617.80 848.33,619.26 853.78,619.80 C859.23,620.34 861.95,620.50 867.40,620.50 C872.85,620.50 875.57,577.00 881.02,577.00 C886.47,577.00 889.19,618.40 894.64,618.40 C900.09,618.40 902.81,613.00 908.26,613.00 C913.71,613.00 916.43,621.30 921.88,621.30 C927.33,621.30 930.05,621.30 935.50,621.30 C940.95,621.30 943.67,621.30 949.12,621.30 C954.57,621.30 957.29,621.30 962.74,617.10 C968.19,612.90 970.91,573.60 976.36,573.60 C981.81,573.60 989.98,622.50 989.98,622.50 L989.98,637 L595.00,637 Z" fill="#4fb5e6" fill-opacity="0.82"/>
<rect x="592.5" y="490" width="401" height="1" fill="#c6c6c6" fill-opacity="0.9"/>
<rect x="592.5" y="527" width="401" height="1" fill="#c6c6c6" fill-opacity="0.9"/>
<rect x="592.5" y="564" width="401" height="1" fill="#c6c6c6" fill-opacity="0.9"/>
<rect x="592.5" y="600" width="401" height="1" fill="#c6c6c6" fill-opacity="0.9"/>
<rect x="592.5" y="637" width="401" height="1" fill="#c0c0c0"/>
<rect x="592" y="637" width="1" height="5" fill="#c0c0c0"/>
<rect x="687" y="637" width="1" height="5" fill="#c0c0c0"/>
<rect x="783" y="637" width="1" height="5" fill="#c0c0c0"/>
<rect x="878" y="637" width="1" height="5" fill="#c0c0c0"/>
<rect x="974" y="637" width="1" height="5" fill="#c0c0c0"/>
<path d="M595.00,617.00 C595.00,617.00 603.17,498.20 608.62,498.20 C614.07,498.20 616.79,582.40 622.24,601.60 C627.69,620.80 630.41,619.60 635.86,620.80 C641.31,622.00 644.03,622.00 649.48,622.00 C654.93,622.00 657.65,620.00 663.10,620.00 C668.55,620.00 671.27,620.40 676.72,620.40 C682.17,620.40 684.89,615.00 690.34,615.00 C695.79,615.00 698.51,620.20 703.96,620.80 C709.41,621.40 712.13,621.40 717.58,621.40 C723.03,621.40 725.75,621.00 731.20,621.00 C736.65,621.00 739.37,622.40 744.82,622.40 C750.27,622.40 752.99,621.00 758.44,619.80 C763.89,618.60 766.61,619.80 772.06,616.40 C777.51,613.00 780.23,517.60 785.68,517.60 C791.13,517.60 793.85,618.80 799.30,618.80 C804.75,618.80 807.47,618.40 812.92,618.40 C818.37,618.40 821.09,620.30 826.54,620.30 C831.99,620.30 834.71,617.80 840.16,617.80 C845.61,617.80 848.33,619.26 853.78,619.80 C859.23,620.34 861.95,620.50 867.40,620.50 C872.85,620.50 875.57,577.00 881.02,577.00 C886.47,577.00 889.19,618.40 894.64,618.40 C900.09,618.40 902.81,613.00 908.26,613.00 C913.71,613.00 916.43,621.30 921.88,621.30 C927.33,621.30 930.05,621.30 935.50,621.30 C940.95,621.30 943.67,621.30 949.12,621.30 C954.57,621.30 957.29,621.30 962.74,617.10 C968.19,612.90 970.91,573.60 976.36,573.60 C981.81,573.60 989.98,622.50 989.98,622.50" fill="none" stroke="#4fb5e6" stroke-width="1.6"/>
<circle cx="595.00" cy="617.00" r="3" fill="#4fb5e6"/>
<circle cx="608.62" cy="498.20" r="3" fill="#4fb5e6"/>
<circle cx="622.24" cy="601.60" r="3" fill="#4fb5e6"/>
<circle cx="635.86" cy="620.80" r="3" fill="#4fb5e6"/>
<circle cx="649.48" cy="622.00" r="3" fill="#4fb5e6"/>
<circle cx="663.10" cy="620.00" r="3" fill="#4fb5e6"/>
<circle cx="676.72" cy="620.40" r="3" fill="#4fb5e6"/>
<circle cx="690.34" cy="615.00" r="3" fill="#4fb5e6"/>
<circle cx="703.96" cy="620.80" r="3" fill="#4fb5e6"/>
<circle cx="717.58" cy="621.40" r="3" fill="#4fb5e6"/>
<circle cx="731.20" cy="621.00" r="3" fill="#4fb5e6"/>
<circle cx="744.82" cy="622.40" r="3" fill="#4fb5e6"/>
<circle cx="758.44" cy="619.80" r="3" fill="#4fb5e6"/>
<circle cx="772.06" cy="616.40" r="3" fill="#4fb5e6"/>
<circle cx="785.68" cy="517.60" r="3" fill="#4fb5e6"/>
<circle cx="799.30" cy="618.80" r="3" fill="#4fb5e6"/>
<circle cx="812.92" cy="618.40" r="3" fill="#4fb5e6"/>
<circle cx="826.54" cy="620.30" r="3" fill="#4fb5e6"/>
<circle cx="840.16" cy="617.80" r="3" fill="#4fb5e6"/>
<circle cx="853.78" cy="619.80" r="3" fill="#4fb5e6"/>
<circle cx="867.40" cy="620.50" r="3" fill="#4fb5e6"/>
<circle cx="881.02" cy="577.00" r="3" fill="#4fb5e6"/>
<circle cx="894.64" cy="618.40" r="3" fill="#4fb5e6"/>
<circle cx="908.26" cy="613.00" r="3" fill="#4fb5e6"/>
<circle cx="921.88" cy="621.30" r="3" fill="#4fb5e6"/>
<circle cx="935.50" cy="621.30" r="3" fill="#4fb5e6"/>
<circle cx="949.12" cy="621.30" r="3" fill="#4fb5e6"/>
<circle cx="962.74" cy="617.10" r="3" fill="#4fb5e6"/>
<circle cx="976.36" cy="573.60" r="3" fill="#4fb5e6"/>
<circle cx="989.98" cy="622.50" r="3" fill="#4fb5e6"/>
<polyline points="595.00,597.00 608.62,599.60 622.24,602.20 635.86,604.20 649.48,606.00 663.10,601.00 676.72,602.60 690.34,594.70 703.96,602.60 717.58,605.00 731.20,604.20 744.82,607.20 758.44,599.60 772.06,593.30 785.68,581.80 799.30,599.70 812.92,598.50 826.54,601.20 840.16,597.50 853.78,600.60 867.40,600.80 881.02,540.10 894.64,599.10 908.26,592.90 921.88,603.70 935.50,602.60 949.12,602.60 962.74,596.40 976.36,551.90 989.98,605.80" fill="none" stroke="#e8914a" stroke-width="1.6" stroke-linejoin="round"/>
<path d="M595.00,593.70 L598.30,597.00 L595.00,600.30 L591.70,597.00 Z" fill="#e8914a"/>
<path d="M608.62,596.30 L611.92,599.60 L608.62,602.90 L605.32,599.60 Z" fill="#e8914a"/>
<path d="M622.24,598.90 L625.54,602.20 L622.24,605.50 L618.94,602.20 Z" fill="#e8914a"/>
<path d="M635.86,600.90 L639.16,604.20 L635.86,607.50 L632.56,604.20 Z" fill="#e8914a"/>
<path d="M649.48,602.70 L652.78,606.00 L649.48,609.30 L646.18,606.00 Z" fill="#e8914a"/>
<path d="M663.10,597.70 L666.40,601.00 L663.10,604.30 L659.80,601.00 Z" fill="#e8914a"/>
<path d="M676.72,599.30 L680.02,602.60 L676.72,605.90 L673.42,602.60 Z" fill="#e8914a"/>
<path d="M690.34,591.40 L693.64,594.70 L690.34,598.00 L687.04,594.70 Z" fill="#e8914a"/>
<path d="M703.96,599.30 L707.26,602.60 L703.96,605.90 L700.66,602.60 Z" fill="#e8914a"/>
<path d="M717.58,601.70 L720.88,605.00 L717.58,608.30 L714.28,605.00 Z" fill="#e8914a"/>
<path d="M731.20,600.90 L734.50,604.20 L731.20,607.50 L727.90,604.20 Z" fill="#e8914a"/>
<path d="M744.82,603.90 L748.12,607.20 L744.82,610.50 L741.52,607.20 Z" fill="#e8914a"/>
<path d="M758.44,596.30 L761.74,599.60 L758.44,602.90 L755.14,599.60 Z" fill="#e8914a"/>
<path d="M772.06,590.00 L775.36,593.30 L772.06,596.60 L768.76,593.30 Z" fill="#e8914a"/>
<path d="M785.68,578.50 L788.98,581.80 L785.68,585.10 L782.38,581.80 Z" fill="#e8914a"/>
<path d="M799.30,596.40 L802.60,599.70 L799.30,603.00 L796.00,599.70 Z" fill="#e8914a"/>
<path d="M812.92,595.20 L816.22,598.50 L812.92,601.80 L809.62,598.50 Z" fill="#e8914a"/>
<path d="M826.54,597.90 L829.84,601.20 L826.54,604.50 L823.24,601.20 Z" fill="#e8914a"/>
<path d="M840.16,594.20 L843.46,597.50 L840.16,600.80 L836.86,597.50 Z" fill="#e8914a"/>
<path d="M853.78,597.30 L857.08,600.60 L853.78,603.90 L850.48,600.60 Z" fill="#e8914a"/>
<path d="M867.40,597.50 L870.70,600.80 L867.40,604.10 L864.10,600.80 Z" fill="#e8914a"/>
<path d="M881.02,536.80 L884.32,540.10 L881.02,543.40 L877.72,540.10 Z" fill="#e8914a"/>
<path d="M894.64,595.80 L897.94,599.10 L894.64,602.40 L891.34,599.10 Z" fill="#e8914a"/>
<path d="M908.26,589.60 L911.56,592.90 L908.26,596.20 L904.96,592.90 Z" fill="#e8914a"/>
<path d="M921.88,600.40 L925.18,603.70 L921.88,607.00 L918.58,603.70 Z" fill="#e8914a"/>
<path d="M935.50,599.30 L938.80,602.60 L935.50,605.90 L932.20,602.60 Z" fill="#e8914a"/>
<path d="M949.12,599.30 L952.42,602.60 L949.12,605.90 L945.82,602.60 Z" fill="#e8914a"/>
<path d="M962.74,593.10 L966.04,596.40 L962.74,599.70 L959.44,596.40 Z" fill="#e8914a"/>
<path d="M976.36,548.60 L979.66,551.90 L976.36,555.20 L973.06,551.90 Z" fill="#e8914a"/>
<path d="M989.98,602.50 L993.28,605.80 L989.98,609.10 L986.68,605.80 Z" fill="#e8914a"/>
<text x="580.0" y="495.2" font-size="8.8" fill="#666" text-anchor="end" textLength="15.3" lengthAdjust="spacingAndGlyphs">80k</text>
<text x="580.0" y="532.0" font-size="8.8" fill="#666" text-anchor="end" textLength="15.3" lengthAdjust="spacingAndGlyphs">60k</text>
<text x="580.0" y="568.8" font-size="8.8" fill="#666" text-anchor="end" textLength="15.3" lengthAdjust="spacingAndGlyphs">40k</text>
<text x="580.0" y="605.6" font-size="8.8" fill="#666" text-anchor="end" textLength="15.3" lengthAdjust="spacingAndGlyphs">20k</text>
<text x="580.0" y="642.4" font-size="8.8" fill="#666" text-anchor="end" textLength="10.0" lengthAdjust="spacingAndGlyphs">0k</text>
<text x="1005.0" y="495.2" font-size="8.8" fill="#666" textLength="15.3" lengthAdjust="spacingAndGlyphs">10k</text>
<text x="1005.0" y="532.0" font-size="8.8" fill="#666" textLength="18.0" lengthAdjust="spacingAndGlyphs">7.5k</text>
<text x="1005.0" y="568.8" font-size="8.8" fill="#666" textLength="10.0" lengthAdjust="spacingAndGlyphs">5k</text>
<text x="1005.0" y="605.6" font-size="8.8" fill="#666" textLength="18.0" lengthAdjust="spacingAndGlyphs">2.5k</text>
<text x="1005.0" y="642.4" font-size="8.8" fill="#666" textLength="10.0" lengthAdjust="spacingAndGlyphs">0k</text>
<text x="592.9" y="652.3" font-size="8.8" fill="#666" text-anchor="middle" textLength="24.3" lengthAdjust="spacingAndGlyphs">06-15</text>
<text x="687.4" y="652.3" font-size="8.8" fill="#666" text-anchor="middle" textLength="24.3" lengthAdjust="spacingAndGlyphs">06-22</text>
<text x="783.3" y="652.3" font-size="8.8" fill="#666" text-anchor="middle" textLength="24.3" lengthAdjust="spacingAndGlyphs">06-29</text>
<text x="878.4" y="652.3" font-size="8.8" fill="#666" text-anchor="middle" textLength="24.3" lengthAdjust="spacingAndGlyphs">07-06</text>
<text x="974.7" y="652.3" font-size="8.8" fill="#666" text-anchor="middle" textLength="24.3" lengthAdjust="spacingAndGlyphs">07-13</text>
<text transform="translate(557.5,564) rotate(-90)" font-size="9.5" fill="#6f6f6f" text-anchor="middle" textLength="48" lengthAdjust="spacingAndGlyphs">Gross Sales</text>
<text transform="translate(1030,564) rotate(90)" font-size="9.5" fill="#6f6f6f" text-anchor="middle" textLength="62" lengthAdjust="spacingAndGlyphs">Items Ordered</text>
<rect x="729" y="677" width="14" height="1.6" fill="#e8914a"/><path d="M736,674.3 L738.9,677.8 L736,681.3 L733.1,677.8 Z" fill="#e8914a"/>
<text x="745.4" y="681.2" font-size="9" fill="#333" font-weight="bold" textLength="23.1" lengthAdjust="spacingAndGlyphs">Sales</text>
<rect x="784" y="673.6" width="11.6" height="8.6" fill="#5dbde9"/>
<text x="799.5" y="681.2" font-size="9" fill="#333" font-weight="bold" textLength="64.5" lengthAdjust="spacingAndGlyphs">Items ordered</text>
</svg>
<svg class="abs" style="left:0;top:0;font-family:'Liberation Sans',sans-serif" width="1062" height="926">
<path d="M20,252.8 L25.6,262.3 L14.4,262.3 Z" fill="#dc4a5a" stroke="#dc4a5a" stroke-width="1.3" stroke-linejoin="round"/>
<rect x="19.3" y="256" width="1.4" height="3.6" fill="#fff"/><rect x="19.3" y="260.3" width="1.4" height="1.3" fill="#fff"/>
<circle cx="547" cy="258.2" r="6.9" fill="#3ab3dd"/>
<circle cx="547" cy="254.6" r="1.2" fill="#fff"/><path d="M545.6,256.8 L548.2,256.8 L548.2,261.2 L549,261.2 L549,262.2 L545.2,262.2 L545.2,261.2 L546,261.2 L546,257.8 L545.6,257.8 Z" fill="#fff"/>
<path d="M20.2,458.8 L29.8,458.8 L29.8,468.4 L15.2,468.4 L15.2,463.6 L17,461 L20.2,461 Z" fill="#e2568a"/>
<path d="M16.6,463.4 L17.8,461.9 L19.6,461.9 L19.6,463.4 Z" fill="#fff"/>
<circle cx="18.8" cy="468.9" r="1.9" fill="#e2568a"/><circle cx="18.8" cy="468.9" r="0.8" fill="#fff"/><circle cx="26.8" cy="468.9" r="1.9" fill="#e2568a"/><circle cx="26.8" cy="468.9" r="0.8" fill="#fff"/>
<path d="M540.4,458.4 L542.8,459 L544.8,468.2 L554.2,468.2" fill="none" stroke="#ee8a2a" stroke-width="1.4" stroke-linejoin="round"/>
<path d="M542.9,459.3 L555,459.3 L555,464 L554,465.4 L544.1,465.4 Z" fill="#ee8a2a"/>
<circle cx="545.6" cy="469.6" r="1.1" fill="#ee8a2a"/><circle cx="552.8" cy="469.6" r="1.1" fill="#ee8a2a"/>
<circle cx="21.1" cy="716" r="6.9" fill="#2ea882"/>
<path d="M17.5,716.4 L21.1,712.6 L24.7,716.4" fill="none" stroke="#e6fff6" stroke-width="1.9" stroke-linecap="round" stroke-linejoin="round"/><path d="M21.1,713.2 L21.1,720.4" stroke="#e6fff6" stroke-width="1.9" stroke-linecap="round"/>
<rect x="540.8" y="710.4" width="15.6" height="9.6" fill="#d6f7ea" stroke="#2b9a70" stroke-width="1.5"/>
<ellipse cx="548.6" cy="715.2" rx="2.2" ry="3" fill="#2b9a70"/><rect x="548.3" y="713.4" width="0.8" height="3.6" fill="#d6f7ea"/>
</svg>
<svg class="abs" style="left:0;top:0" width="1062" height="926">
<text x="904.6" y="901.6" font-family="Liberation Serif, serif" font-size="22" fill="#ffffff" fill-opacity="0.45" stroke="#000" stroke-opacity="0.12" stroke-width="0.9" textLength="143.3" lengthAdjust="spacingAndGlyphs">CrowdReviews</text>
<text x="904.6" y="911.9" font-family="Liberation Sans, sans-serif" font-weight="bold" font-size="7.3" fill="#000" fill-opacity="0.09" textLength="144" lengthAdjust="spacingAndGlyphs">Buyers Guide Based On Client Reviews</text>
</svg>
</body></html>
